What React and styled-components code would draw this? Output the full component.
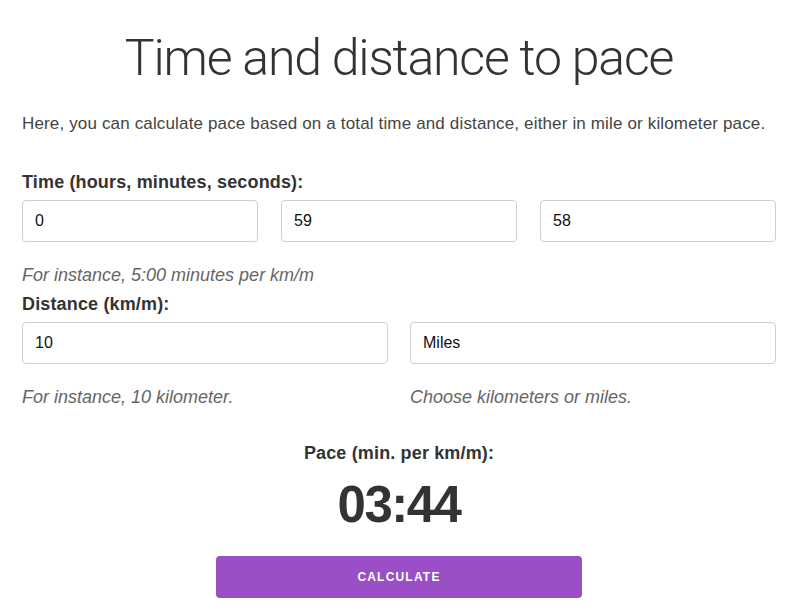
import React from "react";
import styled, { createGlobalStyle } from "styled-components";

const GlobalStyle = createGlobalStyle`
  body {
    margin: 0;
    background: #ffffff;
    font-family: "Liberation Sans", Arial, sans-serif;
    color: #333;
  }
`;

const Page = styled.div`
  padding: 0 24px 0 22px;
  display: flex;
  flex-direction: column;
`;

const Title = styled.h1`
  margin: 28px 0 0;
  text-align: center;
  font-family: Roboto, "Liberation Sans", sans-serif;
  font-weight: 300;
  font-size: 50px;
  letter-spacing: -1.2px;
  color: #333;
  line-height: 60px;
`;

const Intro = styled.p`
  margin: 24px 0 0;
  font-size: 17px;
  letter-spacing: 0.15px;
  color: #444;
  line-height: 24px;
`;

const Label = styled.div`
  margin-top: ${(p) => p.$top || 0}px;
  font-size: 18px;
  letter-spacing: 0.15px;
  font-weight: bold;
  color: #333;
  line-height: 22px;
`;

const Grid = styled.div`
  display: grid;
  grid-template-columns: repeat(${(p) => p.$cols}, 1fr);
  column-gap: ${(p) => p.$gap}px;
  margin-top: 7px;
`;

const Field = styled.div`
  display: flex;
  flex-direction: column;
`;

const Input = styled.div`
  height: 42px;
  box-sizing: border-box;
  border: 1px solid #cfcfcf;
  border-radius: 4px;
  padding: 0 12px;
  display: flex;
  align-items: center;
  font-size: 16px;
  color: #111;
`;

const Help = styled.div`
  margin-top: ${(p) => p.$top}px;
  font-size: 18px;
  font-style: italic;
  color: #666;
  line-height: 22px;
`;

const Result = styled.div`
  margin-top: 34px;
  display: flex;
  flex-direction: column;
  align-items: center;
`;

const PaceLabel = styled.div`
  font-size: 18px;
  letter-spacing: 0.15px;
  font-weight: bold;
  color: #333;
  line-height: 22px;
`;

const PaceValue = styled.div`
  margin-top: 11px;
  font-size: 51px;
  font-weight: bold;
  letter-spacing: -1.5px;
  color: #333;
  line-height: 60px;
`;

const Button = styled.button`
  margin-top: 21px;
  width: 366px;
  height: 42px;
  border: none;
  border-radius: 4px;
  background: #9a4fc6;
  color: #fff;
  font-family: "Liberation Sans", Arial, sans-serif;
  font-size: 12px;
  font-weight: bold;
  letter-spacing: 1.2px;
  cursor: pointer;
`;

const App = () => {
  return (
    <Page>
      <GlobalStyle />
      <Title>Time and distance to pace</Title>
      <Intro>
        Here, you can calculate pace based on a total time and distance, either
        in mile or kilometer pace.
      </Intro>

      <Label $top={35}>Time (hours, minutes, seconds):</Label>
      <Grid $cols={3} $gap={23}>
        <Input>0</Input>
        <Input>59</Input>
        <Input>58</Input>
      </Grid>
      <Help $top={22}>For instance, 5:00 minutes per km/m</Help>

      <Label $top={7}>Distance (km/m):</Label>
      <Grid $cols={2} $gap={22}>
        <Field>
          <Input>10</Input>
          <Help $top={22}>For instance, 10 kilometer.</Help>
        </Field>
        <Field>
          <Input>Miles</Input>
          <Help $top={22}>Choose kilometers or miles.</Help>
        </Field>
      </Grid>

      <Result>
        <PaceLabel>Pace (min. per km/m):</PaceLabel>
        <PaceValue>03:44</PaceValue>
        <Button>CALCULATE</Button>
      </Result>
    </Page>
  );
};

export default App;
